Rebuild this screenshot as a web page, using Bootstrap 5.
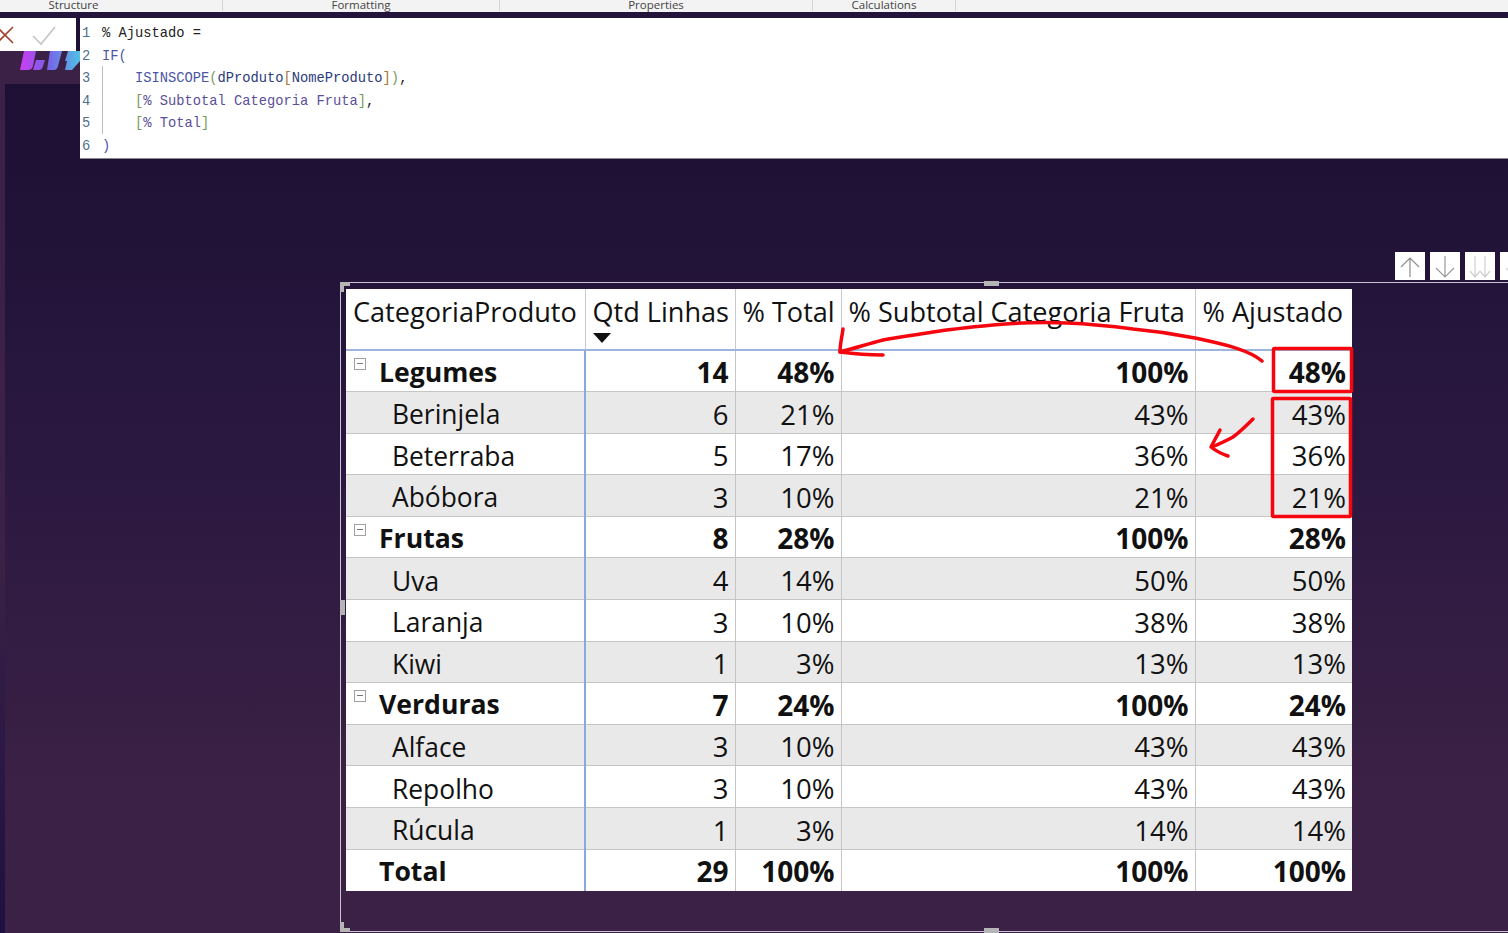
<!DOCTYPE html>
<html lang="en">
<head>
    <meta charset="UTF-8">
    <title>Medida % Ajustado</title>
    <link href="https://cdn.jsdelivr.net/npm/bootstrap@5.3.0/dist/css/bootstrap.min.css" rel="stylesheet">
    <style>
        html, body { height: 100%; }
        body {
            background: linear-gradient(180deg, #1c1033 0%, #1f1136 18%, #2b1840 50%, #3b2145 85%, #3b2145 100%);
            font-family: "Open Sans", "Liberation Sans", sans-serif;
            overflow: hidden;
            position: relative;
        }
        .ribbon-strip {
            height: 12px;
            background: #f3f3f3;
            overflow: hidden;
            font-size: 11.5px;
            line-height: 10px;
            color: #444;
        }
        .ribbon-group { border-right: 1px solid #d4d4d4; text-align: center; height: 11px; }
        .rg-1 { width: 223px; padding-right: 75px; }
        .rg-2 { width: 277px; }
        .rg-3 { width: 313px; }
        .rg-4 { width: 143px; }
        .dark-line { height: 6px; background: #24133a; }
        .formula-row { height: 141px; }
        .formula-btns {
            width: 76px; height: 33px;
            background: #fff;
            margin-right: 4px;
        }
        .formula-edit {
            flex: 1;
            background: #fff;
            border-bottom: 1px solid #8a8a8a;
            font-family: "Liberation Mono", monospace;
            font-size: 13.75px;
            line-height: 22.6px;
            padding: 5px 0 0 2px;
            white-space: pre;
            position: relative;
        }
        .indent-guide { position: absolute; left: 22px; top: 48px; height: 68px; border-left: 1px solid #bbb; }
        .ln { color: #4d6f8c; display: inline-block; width: 20px; }
        .k-fn { color: #4a55a8; }
        .k-br { color: #7a9a5a; }
        .k-cl { color: #a5793a; }
        .k-me { color: #5b4f9a; }
        .k-co { color: #2b3a7a; }
        .k-tb { color: #222; }
        .side-top { position: absolute; left: 0; top: 51px; width: 80px; height: 33px; background: #3b2145; }
        .side-strip {
            position: absolute; left: 0; top: 84px; width: 5px; height: 849px;
            background: linear-gradient(180deg, #3b2145 0%, #3b2145 55%, #2e1a45 75%, #1e1040 100%);
        }
        .visual-wrap {
            margin: 123px 0 0 340px;
            width: 1168px;
            height: 650px;
            padding: 6px 0 0 5px;
            border: 1px solid #c9c3d4;
            border-right: 0;
            position: relative;
        }
        .grip { position: absolute; background: #b5b5b8; }
        .grip-tl { left: -1px; top: -1px; width: 10px; height: 10px; clip-path: polygon(0 0, 100% 0, 100% 40%, 40% 40%, 40% 100%, 0 100%); }
        .grip-bl { left: -1px; bottom: -1px; width: 10px; height: 10px; clip-path: polygon(0 0, 40% 0, 40% 60%, 100% 60%, 100% 100%, 0 100%); }
        .grip-t { left: 643px; top: -2px; width: 15px; height: 5px; }
        .grip-b { left: 643px; bottom: -2px; width: 15px; height: 5px; }
        .grip-l { left: -1px; top: 317px; width: 5px; height: 15px; }
        .drill-btns { position: absolute; left: 1054px; top: -31px; gap: 5px; }
        .drill-btn { width: 30px; height: 28px; background: #fff; display: block; }
        table.matrix {
            table-layout: fixed;
            width: 1006px;
            margin: 0;
            background: #fff;
            color: #111;
            font-size: 27.5px;
            line-height: 1;
            border-collapse: collapse;
        }
        .matrix .c1 { width: 239px; }
        .matrix .c2 { width: 150px; }
        .matrix .c3 { width: 106px; }
        .matrix .c4 { width: 354px; }
        .matrix .c5 { width: 157px; }
        .matrix th {
            height: 61px;
            font-size: 27.1px;
            font-weight: 400;
            vertical-align: top;
            padding: 9px 6px 0 7px;
            border-right: 1px solid #c5c9d3;
            border-bottom: 2px solid #9db4dc;
            white-space: nowrap;
            position: relative;
        }
        .matrix th:last-child, .matrix td:last-child { border-right: 0; }
        .matrix td {
            height: 41.6px;
            padding: 4px 6px 0 0;
            text-align: right;
            vertical-align: middle;
            border-right: 1px solid #c5c5c5;
            border-bottom: 1px solid #c5c5c5;
            white-space: nowrap;
        }
        .matrix td:first-child { text-align: left; border-right: 2px solid #8ba8dc; position: relative; }
        .matrix tr.grp td, .matrix tr.tot td { font-weight: 700; font-size: 28px; padding-top: 2px; }
        .matrix tr.grp td:first-child, .matrix tr.tot td:first-child { padding-left: 33px; font-size: 26.6px; }
        .matrix tr.leaf td:first-child { padding-left: 46px; font-size: 26.4px; }
        .matrix tr.leaf td { background: #e9e9e9; }
        .matrix tr.leaf.plain td { background: #fff; }
        .matrix tr:last-child td { border-bottom: 0; }
        .sort-tri {
            position: absolute; left: 7px; top: 44px;
            border-left: 9.5px solid transparent;
            border-right: 9.5px solid transparent;
            border-top: 10px solid #111;
        }
        .expander {
            position: absolute; left: 8px; top: 7px;
            width: 12px; height: 12px;
            border: 1px solid #a0a0a0;
        }
        .expander::after { content: ""; position: absolute; left: 2px; top: 4px; width: 6px; border-top: 1px solid #777; }
        .annot { position: absolute; left: 0; top: 0; pointer-events: none; }
    </style>
</head>
<body>
    <div class="ribbon-strip d-flex">
        <div class="ribbon-group rg-1">Structure</div>
        <div class="ribbon-group rg-2">Formatting</div>
        <div class="ribbon-group rg-3">Properties</div>
        <div class="ribbon-group rg-4">Calculations</div>
    </div>
    <div class="dark-line"></div>

    <div class="side-top"></div>
    <div class="side-strip"></div>
    <svg class="annot" width="80" height="84" viewBox="0 0 80 84">
        <defs>
            <linearGradient id="logoGrad" x1="20" x2="80" y1="0" y2="0" gradientUnits="userSpaceOnUse">
                <stop offset="0" stop-color="#cc3df2"/>
                <stop offset=".45" stop-color="#7a5fe8"/>
                <stop offset="1" stop-color="#4fc0e4"/>
            </linearGradient>
        </defs>
        <path d="M24 51h12l-3 15q-1 4-5 4h-8zM36 60h9l-2 6q-1 4-4 4h-6zM50 51h12l-4 15q-1 4-4 4h-7zM68 51h12v10l-8 9h-7l2-9h-2z" fill="url(#logoGrad)"/>
    </svg>

    <div class="formula-row d-flex position-relative">
        <div class="formula-btns d-flex align-items-center">
            <svg width="76" height="33" viewBox="0 0 76 33">
                <path d="M-3 9 13 25M13 9-3 25" stroke="#a5402f" stroke-width="1.6" fill="none"/>
                <path d="M33 18l8 8 14-17" stroke="#c4c4c4" stroke-width="1.6" fill="none"/>
            </svg>
        </div>
        <div class="formula-edit"><span class="indent-guide"></span><span class="ln">1</span><span class="k-tb">% Ajustado =</span>
<span class="ln">2</span><span class="k-fn">IF(</span>
<span class="ln">3</span>    <span class="k-fn">ISINSCOPE</span><span class="k-br">(</span><span class="k-co">dProduto</span><span class="k-cl">[</span><span class="k-co">NomeProduto</span><span class="k-cl">]</span><span class="k-br">)</span><span class="k-tb">,</span>
<span class="ln">4</span>    <span class="k-br">[</span><span class="k-me">% Subtotal Categoria Fruta</span><span class="k-br">]</span><span class="k-tb">,</span>
<span class="ln">5</span>    <span class="k-br">[</span><span class="k-me">% Total</span><span class="k-br">]</span>
<span class="ln">6</span><span class="k-fn">)</span></div>
    </div>

    <div class="visual-wrap">
        <span class="grip grip-tl"></span>
        <span class="grip grip-bl"></span>
        <span class="grip grip-t"></span>
        <span class="grip grip-b"></span>
        <span class="grip grip-l"></span>
        <div class="drill-btns d-flex">
            <span class="drill-btn"><svg width="30" height="28" viewBox="0 0 30 28"><path d="M15 25V6M6 15l9-9 9 9" stroke="#8c8c8c" stroke-width="1.2" fill="none"/></svg></span>
            <span class="drill-btn"><svg width="30" height="28" viewBox="0 0 30 28"><path d="M15 4v21M6 16l9 9 9-9" stroke="#9a9a9a" stroke-width="1.2" fill="none"/></svg></span>
            <span class="drill-btn"><svg width="30" height="28" viewBox="0 0 30 28"><path d="M10 4v21M5 19l5 6 5-6M20 4v21M15 19l5 6 5-6" stroke="#cfcfcf" stroke-width="1.2" fill="none"/></svg></span>
            <span class="drill-btn"><svg width="30" height="28" viewBox="0 0 30 28"><path d="M15 4v21M6 16l9 9 9-9" stroke="#cfcfcf" stroke-width="1.2" fill="none"/></svg></span>
        </div>
        <table class="matrix">
            <colgroup><col class="c1"><col class="c2"><col class="c3"><col class="c4"><col class="c5"></colgroup>
            <thead>
                <tr><th>CategoriaProduto</th><th>Qtd Linhas<span class="sort-tri"></span></th><th>% Total</th><th>% Subtotal Categoria Fruta</th><th>% Ajustado</th></tr>
            </thead>
            <tbody id="rows"></tbody>
        </table>
    </div>

    <svg class="annot" width="1508" height="933" viewBox="0 0 1508 933" fill="none" stroke="#f5060f" stroke-linecap="round" stroke-linejoin="round">
        <rect x="1273.500" y="348.500" width="78" height="43" rx="1" stroke-width="3.5"/>
        <rect x="1272.500" y="398.500" width="78" height="118" rx="1" stroke-width="3.5"/>
        <path d="M1262 361C1248 349 1222 344 1195 338C1175 334 1155 331 1133 329C1110 326 1090 324 1067 323C1040 322 1015 323 993 325C972 327 952 329 933 332C915 335 900 337 883 340C868 344 855 348 840 352" stroke-width="3.5"/>
        <path d="M843 329C842 337 840 344 840 352C855 354 870 355 883 355" stroke-width="3.5"/>
        <path d="M1253 419C1246 426 1240 432 1233 437C1226 441 1219 444 1212 447" stroke-width="3.5"/>
        <path d="M1220 430C1217 436 1214 441 1211 447C1216 451 1222 454 1228 456" stroke-width="3.5"/>
    </svg>

    <script>
        // matrix rows: [label, qtd, total, subtotal, ajustado, kind]
        const rows = [
            ['Legumes', 14, '48%', '100%', '48%', 'grp'],
            ['Berinjela', 6, '21%', '43%', '43%', 'leaf'],
            ['Beterraba', 5, '17%', '36%', '36%', 'leaf plain'],
            ['Abóbora', 3, '10%', '21%', '21%', 'leaf'],
            ['Frutas', 8, '28%', '100%', '28%', 'grp'],
            ['Uva', 4, '14%', '50%', '50%', 'leaf'],
            ['Laranja', 3, '10%', '38%', '38%', 'leaf plain'],
            ['Kiwi', 1, '3%', '13%', '13%', 'leaf'],
            ['Verduras', 7, '24%', '100%', '24%', 'grp'],
            ['Alface', 3, '10%', '43%', '43%', 'leaf'],
            ['Repolho', 3, '10%', '43%', '43%', 'leaf plain'],
            ['Rúcula', 1, '3%', '14%', '14%', 'leaf'],
            ['Total', 29, '100%', '100%', '100%', 'tot']
        ];
        document.getElementById('rows').innerHTML = rows.map(r => `
            <tr class="${r[5]}">
                <td>${r[5] === 'grp' ? '<span class="expander"></span>' : ''}${r[0]}</td>
                <td>${r[1]}</td><td>${r[2]}</td><td>${r[3]}</td><td>${r[4]}</td>
            </tr>`).join('');
    </script>
    <script src="https://cdn.jsdelivr.net/npm/bootstrap@5.3.0/dist/js/bootstrap.bundle.min.js"></script>
</body>
</html>
